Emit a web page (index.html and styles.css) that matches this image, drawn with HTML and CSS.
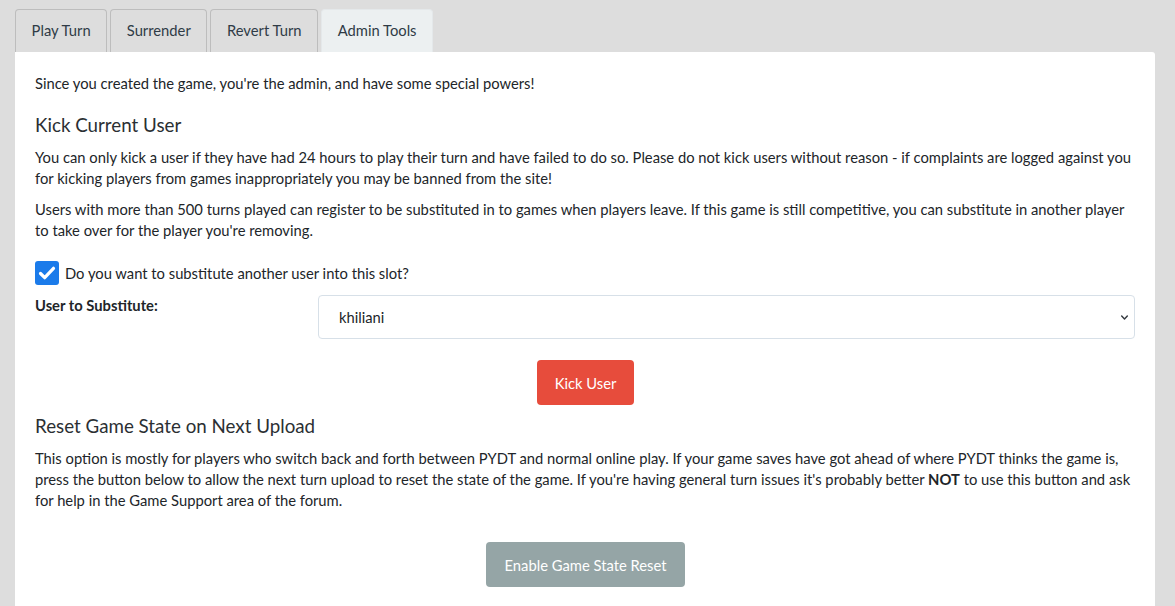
FILE: index.html
```html
<!DOCTYPE html>
<html>
<head>
<meta charset="utf-8">
<link rel="stylesheet" href="styles.css">
</head>
<body>
<div class="wrap">
  <ul class="tabs">
    <li class="tab">Play Turn</li>
    <li class="tab">Surrender</li>
    <li class="tab">Revert Turn</li>
    <li class="tab active">Admin Tools</li>
  </ul>
  <div class="panel">
    <p class="intro">Since you created the game, you're the admin, and have some special powers!</p>
    <h4>Kick Current User</h4>
    <p>You can only kick a user if they have had 24 hours to play their turn and have failed to do so. Please do not kick users without reason - if complaints are logged against you for kicking players from games inappropriately you may be banned from the site!</p>
    <p>Users with more than 500 turns played can register to be substituted in to games when players leave. If this game is still competitive, you can substitute in another player to take over for the player you're removing.</p>
    <label class="check">
      <span class="box"><svg viewBox="0 0 24 24" width="24" height="24"><path d="M5.5 12.5l4.2 4.2 8.8-9.4" fill="none" stroke="#fff" stroke-width="3.2" stroke-linecap="round" stroke-linejoin="round"/></svg></span>
      <span>Do you want to substitute another user into this slot?</span>
    </label>
    <div class="field">
      <div class="flabel">User to Substitute:</div>
      <div class="select">
        <span>khiliani</span>
        <svg viewBox="0 0 16 16" width="9" height="9"><path d="M3 5.5l5 5 5-5" fill="none" stroke="#343a40" stroke-width="2.6" stroke-linecap="round" stroke-linejoin="round"/></svg>
      </div>
    </div>
    <div class="center kick"><button class="btn danger">Kick User</button></div>
    <h4 class="h2">Reset Game State on Next Upload</h4>
    <p>This option is mostly for players who switch back and forth between PYDT and normal online play. If your game saves have got ahead of where PYDT thinks the game is, press the button below to allow the next turn upload to reset the state of the game. If you're having general turn issues it's probably better <b>NOT</b> to use this button and ask for help in the Game Support area of the forum.</p>
    <div class="center bottom"><button class="btn secondary">Enable Game State Reset</button></div>
  </div>
</div>
</body>
</html>
```
FILE: styles.css
```css
* { box-sizing: border-box; }
html, body { margin: 0; padding: 0; }
body {
  background: #dddddd;
  font-family: Lato, "Open Sans", sans-serif;
  font-size: 14.75px;
  line-height: 21px;
  color: #212529;
}
.wrap { padding: 9px 20px 0 15px; }
.tabs {
  list-style: none;
  margin: 0;
  padding: 0;
  display: flex;
  gap: 3px;
}
.tab {
  height: 43px;
  padding: 0 15.6px 1px;
  display: flex;
  align-items: center;
  border: 1px solid #bdbdbd;
  border-bottom: none;
  border-radius: 4px 4px 0 0;
  background: #dddddd;
  color: #2f3b46;
}
.tab.active {
  background: #ecf0f1;
  border-color: #e4e8ea;
}
.panel {
  background: #fff;
  padding: 21px 20px 18px;
  border-radius: 0 3px 0 0;
  height: 560px;
}
p { margin: 0 0 10px; }
.intro { margin-bottom: 19px; }
h4 {
  font-weight: 400;
  font-size: 18.75px;
  line-height: 24px;
  margin: 0 0 10px;
  color: #2b2f33;
}
.check {
  display: flex;
  align-items: center;
  gap: 6px;
  margin-top: 20px;
}
.box {
  width: 24px;
  height: 24px;
  border-radius: 3px;
  background: #1b7bea;
  display: block;
}
.box svg { display: block; }
.field {
  display: grid;
  grid-template-columns: 283px 1fr;
  margin-top: 10px;
}
.flabel { font-weight: 700; }
.select {
  height: 44px;
  border: 1px solid #d7e0e8;
  border-radius: 4px;
  display: flex;
  align-items: center;
  justify-content: space-between;
  padding: 0 5px 0 20px;
}
.center { display: flex; justify-content: center; margin-left: 1px; }
.kick { margin-top: 21px; }
.btn {
  font-family: inherit;
  font-size: 14.75px;
  color: #fff;
  border: none;
  border-radius: 4px;
  height: 45px;
  padding: 0 18px;
}
.danger { background: #e74c3c; }
.secondary { background: #95a5a6; padding: 0 19px; }
.h2 { margin-top: 9px; }
.bottom { margin-top: 31px; }
```
